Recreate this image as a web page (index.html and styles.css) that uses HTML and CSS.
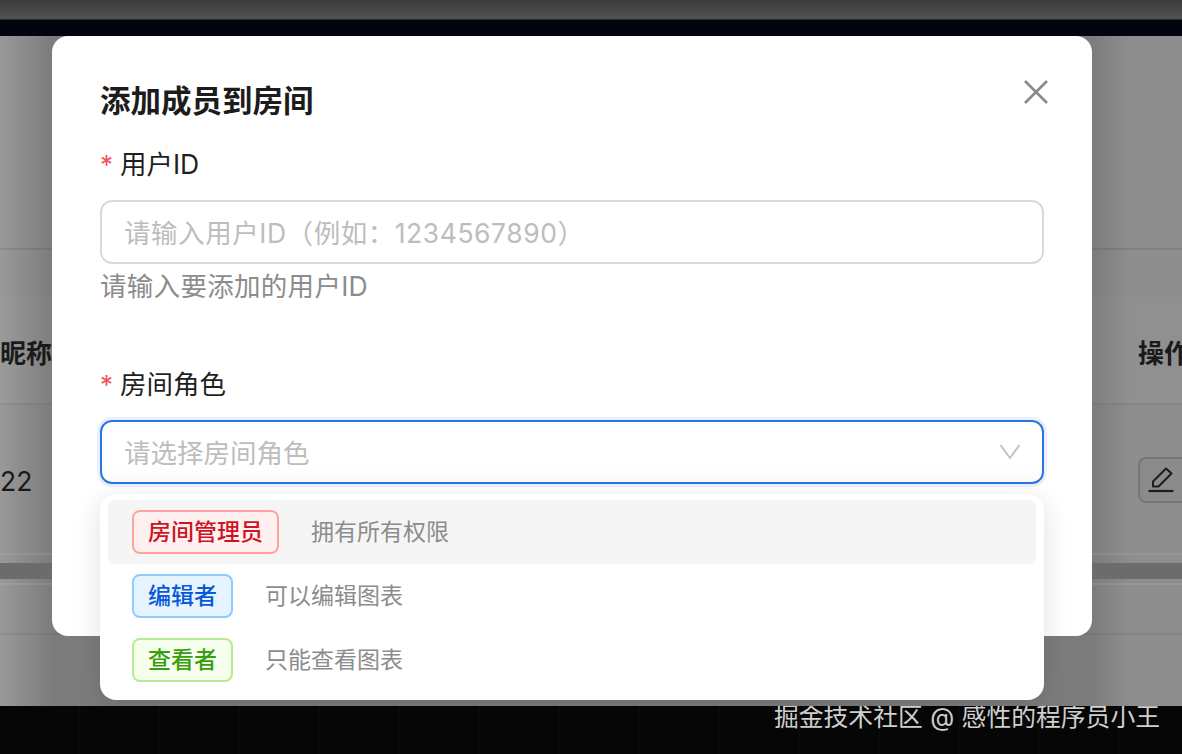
FILE: index.html
```html
<!DOCTYPE html>
<html lang="zh-CN">
<head>
    <meta charset="UTF-8">
    <meta name="viewport" content="width=device-width, initial-scale=1.0">
    <title>添加成员到房间</title>
    <link rel="stylesheet" href="styles.css">
</head>
<body>
    <div class="top-bar"></div>
    <div class="dark-band"></div>

    <div class="stage">
        <!-- Dimmed page behind the dialog -->
        <div class="page">
            <div class="page-head"></div>
            <div class="table-head">
                <span class="th-name">昵称</span>
                <span class="th-action">操作</span>
            </div>
            <div class="table-row">
                <span class="td-name">22</span>
                <button class="edit-btn">
                    <svg width="26" height="26" viewBox="0 0 26 26" fill="none" stroke="#1c1c1c" stroke-width="2">
                        <path d="M5 19.500v-5L18 1.500l5.500 5L10.500 19.500z" stroke-linejoin="round"/>
                        <path d="M0.500 24h25" stroke-width="2.200"/>
                    </svg>
                </button>
            </div>
            <div class="scroll-band"></div>
            <div class="table-foot"></div>
        </div>

        <div class="modal">
            <h2 class="modal-title">添加成员到房间</h2>
            <svg class="modal-close" width="24" height="24" viewBox="0 0 24 24" fill="none" stroke="#8a8a8a" stroke-width="2.600">
                <path d="M1 1l22 22M23 1 1 23"/>
            </svg>

            <div class="form-item item-user">
                <label class="form-label"><span class="required">*</span>用户ID</label>
                <div class="field field-wide">请输入用户ID（例如：1234567890）</div>
                <div class="hint">请输入要添加的用户ID</div>
            </div>

            <div class="form-item">
                <label class="form-label"><span class="required">*</span>房间角色</label>
                <div class="field field-focus">
                    <span>请选择房间角色</span>
                    <svg width="20" height="15" viewBox="0 0 20 15" fill="none" stroke="#c4c4c4" stroke-width="2">
                        <path d="M0.500 1l9.500 13L19.500 1"/>
                    </svg>
                </div>
            </div>

            <div class="dropdown">
                <div class="option option-active">
                    <span class="tag tag-red">房间管理员</span>
                    <span class="option-desc">拥有所有权限</span>
                </div>
                <div class="option">
                    <span class="tag tag-blue">编辑者</span>
                    <span class="option-desc">可以编辑图表</span>
                </div>
                <div class="option">
                    <span class="tag tag-green">查看者</span>
                    <span class="option-desc">只能查看图表</span>
                </div>
            </div>
        </div>
    </div>

    <div class="footer">
        <span class="watermark">掘金技术社区 @ 感性的程序员小王</span>
    </div>
</body>
</html>
```

FILE: styles.css
```css
* {
    box-sizing: border-box;
}
html, body {
    height: 100%;
}
body {
    margin: 0;
    overflow: hidden;
    display: flex;
    flex-direction: column;
    background-color: #050505;
    font-family: Inter, "Noto Sans CJK SC", sans-serif;
    color: #1d1d1d;
}
.top-bar {
    height: 20px;
    background: linear-gradient(#3c3c3c, #525252);
    border-bottom: 1px solid #2a2a2a;
}
.dark-band {
    height: 16px;
    background-color: #02050c;
}
.stage {
    position: relative;
    height: 670px;
    overflow: hidden;
    background: linear-gradient(90deg, #999 0, #7c7c7c 52px, #7c7c7c 1092px, #8e8e8e 1130px);
}
.page {
    display: flex;
    flex-direction: column;
    height: 100%;
}
.page-head {
    height: 214px;
    border-bottom: 2px solid rgba(0, 0, 0, 0.08);
    margin-bottom: 47px;
}
.table-head {
    height: 108px;
    display: flex;
    align-items: center;
    justify-content: space-between;
    padding: 2px 0 0 0;
    border-bottom: 2px solid rgba(0, 0, 0, 0.06);
    background-color: rgba(255, 255, 255, 0.02);
    font-size: 26px;
    font-weight: 700;
    color: #1a1a1a;
}
.th-action {
    width: 44px;
    white-space: nowrap;
}
.table-row {
    height: 150px;
    display: flex;
    align-items: flex-start;
    justify-content: space-between;
    padding-top: 52px;
    border-bottom: 2px solid rgba(255, 255, 255, 0.08);
    font-size: 26.500px;
    color: #1a1a1a;
}
.td-name {
    line-height: 48px;
}
.edit-btn {
    width: 44px;
    height: 46px;
    padding: 0 0 0 8px;
    display: flex;
    align-items: center;
    background-color: #8b8b8b;
    border: 2px solid #767676;
    border-right: none;
    border-radius: 8px 0 0 8px;
}
.scroll-band {
    height: 16px;
    margin-top: 8px;
    background-color: #6c6c6c;
}
.table-foot {
    height: 52px;
    margin-top: 4px;
    border-top: 2px solid rgba(255, 255, 255, 0.08);
    border-bottom: 2px solid rgba(0, 0, 0, 0.06);
}
.modal {
    position: absolute;
    left: 52px;
    top: 0;
    width: 1040px;
    height: 600px;
    padding: 45px 48px 0;
    background-color: #fff;
    border-radius: 16px;
}
.modal-title {
    margin: 0 0 25px;
    font-size: 30.500px;
    line-height: 40px;
    font-weight: 700;
    color: #1c1c1c;
}
.modal-close {
    position: absolute;
    right: 44px;
    top: 44px;
}
.form-item {
    display: flex;
    flex-direction: column;
}
.item-user {
    margin-bottom: 62px;
}
.form-label {
    height: 36px;
    margin-bottom: 18px;
    font-size: 26.500px;
    line-height: 36px;
    color: #1f1f1f;
}
.required {
    display: inline-block;
    width: 20px;
    color: #f4525a;
    font-size: 26px;
    font-weight: 400;
}
.field {
    height: 64px;
    padding: 0 22px 2px;
    display: flex;
    align-items: center;
    justify-content: space-between;
    border: 2px solid #d9d9d9;
    border-radius: 12px;
    font-size: 26.500px;
    color: #bdbdbd;
    white-space: nowrap;
}
.field-wide {
    letter-spacing: 0.550px;
}
.field-focus {
    padding-right: 22px;
    border-color: #2a74e8;
    box-shadow: 0 0 0 3px rgba(40, 120, 240, 0.1);
    background: linear-gradient(#fff 70%, #fbfbfb);
}
.hint {
    margin-top: 4px;
    height: 36px;
    font-size: 26.500px;
    line-height: 36px;
    letter-spacing: 0.300px;
    color: #8c8c8c;
}
.dropdown {
    position: absolute;
    left: 48px;
    top: 458px;
    width: 944px;
    height: 206px;
    padding: 6px 8px;
    background-color: #fff;
    border-radius: 16px;
    box-shadow: 0 6px 28px rgba(0, 0, 0, 0.12);
}
.option {
    height: 64px;
    padding: 0 24px;
    display: flex;
    align-items: center;
    gap: 32px;
    border-radius: 8px;
}
.option-active {
    background-color: #f5f5f5;
}
.option-desc {
    padding-bottom: 4px;
    font-size: 23px;
    color: #8c8c8c;
}
.tag {
    height: 44px;
    padding: 0 14px 4px;
    display: flex;
    align-items: center;
    border: 2px solid;
    border-radius: 8px;
    font-size: 23px;
    font-weight: 500;
}
.tag-red {
    color: #cf1322;
    background-color: #fff1f0;
    border-color: #ffa39e;
}
.tag-blue {
    color: #0958d9;
    background-color: #e6f4ff;
    border-color: #91caff;
}
.tag-green {
    color: #389e0d;
    background-color: #f6ffed;
    border-color: #b7eb8f;
}
.footer {
    flex: 1;
    padding: 0 22px 0 0;
    display: flex;
    align-items: flex-start;
    justify-content: flex-end;
    background: repeating-linear-gradient(90deg, #060606 0, #060606 79px, #111 80px);
}
.watermark {
    font-size: 24.800px;
    line-height: 22px;
    word-spacing: 0.500px;
    color: #cfcfcf;
    white-space: nowrap;
}
```
